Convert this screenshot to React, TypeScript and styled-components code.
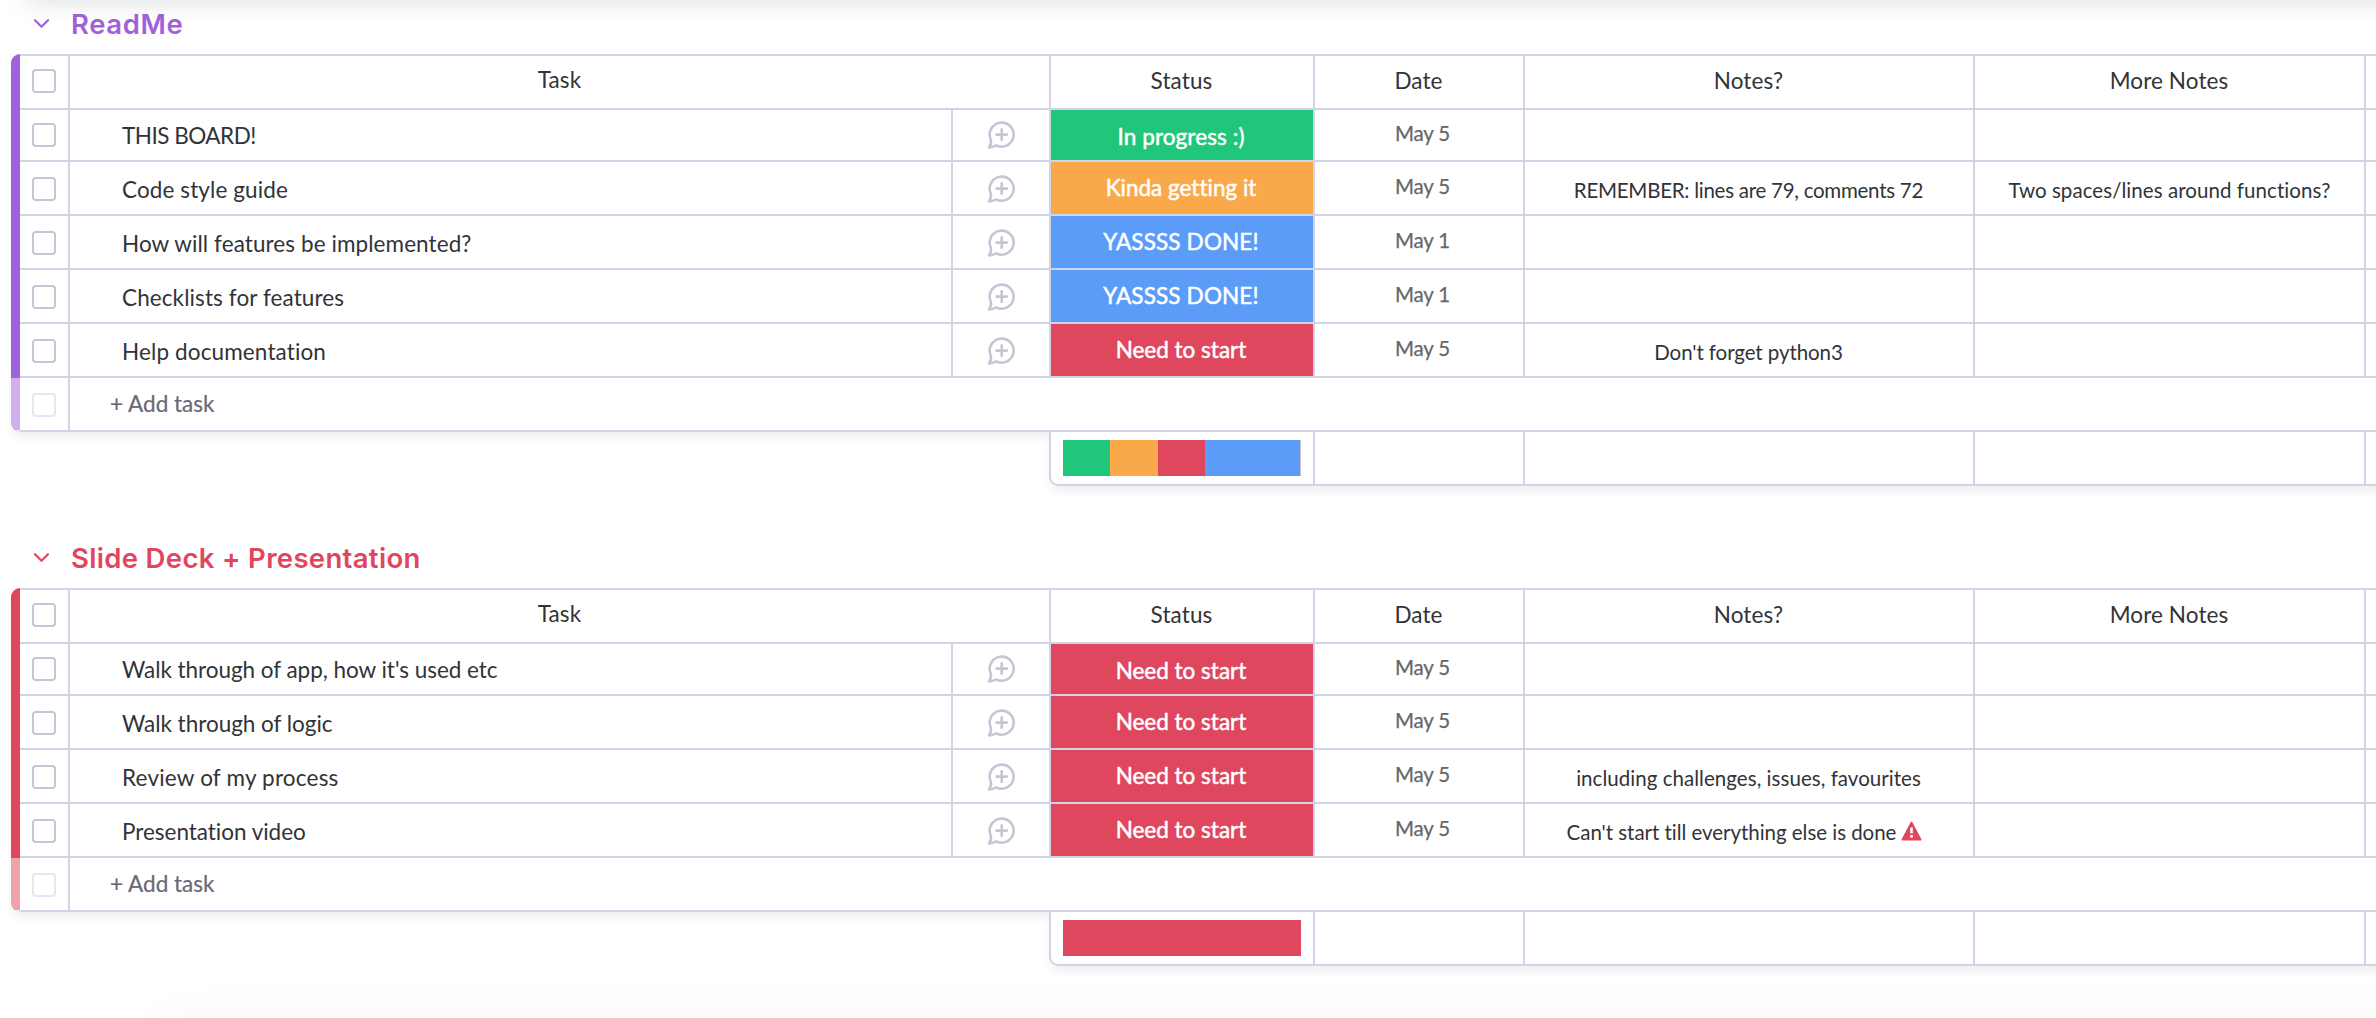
import React from 'react';
import styled, { createGlobalStyle } from 'styled-components';

const LINE = '#d0d4e4';
const RED = '#df475e';
const GREEN = '#20c77b';
const ORANGE = '#faa94a';
const BLUE = '#5b9cf8';
const PURPLE = '#a161da';

const GlobalStyle = createGlobalStyle`
  * { box-sizing: border-box; }
  html, body { margin: 0; background: #fff; overflow: hidden; }
  body { font-family: Lato, "Liberation Sans", sans-serif; color: #323338; }
`;

const Board = styled.main`
  position: relative;
  width: 2376px;
  height: 1018px;
  overflow: hidden;
  background: #fff;
`;

const TopShade = styled.div`
  position: absolute;
  top: -40px;
  left: 30px;
  right: -60px;
  height: 38px;
  box-shadow: 0 0 24px 4px rgba(60, 65, 85, 0.17);
`;

const BottomShade = styled.div`
  position: absolute;
  left: 170px;
  right: -100px;
  bottom: -60px;
  height: 40px;
  box-shadow: 0 0 60px 0 rgba(0, 0, 0, 0.1);
`;

const Group = styled.section`
  height: 534px;
  padding-left: 11px;
`;

const GroupTitle = styled.header<{ $color: string }>`
  display: flex;
  align-items: center;
  height: 54px;
  padding: 0 0 6px 22px;
  color: ${(p) => p.$color};
`;

const Chevron = styled.svg`
  width: 17px;
  height: 12px;
  flex: none;
`;

const TitleText = styled.h2<{ $spacing: number }>`
  margin: 0 0 0 21px;
  font: 600 27.5px/36px Inter, "Liberation Sans", sans-serif;
  letter-spacing: ${(p) => p.$spacing}px;
  white-space: nowrap;
`;

const Table = styled.div`
  display: flex;
  width: 2380px;
  border-bottom-left-radius: 9px;
  box-shadow: 0 7px 12px -3px rgba(0, 0, 0, 0.08);
`;

const Stripe = styled.div`
  display: flex;
  flex-direction: column;
  width: 9px;
  flex: none;
  border-radius: 9px 0 0 9px;
  overflow: hidden;
`;

const StripeMain = styled.div<{ $color: string }>`
  flex: 1;
  background: ${(p) => p.$color};
`;

const StripeFade = styled.div<{ $color: string }>`
  height: 54px;
  background: ${(p) => p.$color};
  opacity: 0.5;
  border-bottom: 2px solid ${LINE};
`;

const Rows = styled.div`
  flex: 1;
  border-top: 2px solid ${LINE};
`;

const columns = '50px 883px 98px 264px 210px 450px 391px 1fr';

const Row = styled.div<{ $first?: boolean }>`
  display: grid;
  grid-template-columns: ${columns};
  height: ${(p) => (p.$first ? 52 : 54)}px;
  border-bottom: 2px solid ${LINE};
`;

const Cell = styled.div<{ $span?: number; $shift?: number; $plain?: boolean }>`
  display: flex;
  align-items: center;
  justify-content: center;
  min-width: 0;
  grid-column: span ${(p) => p.$span ?? 1};
  padding-top: ${(p) => Math.max(0, p.$shift ?? 0)}px;
  padding-bottom: ${(p) => Math.max(0, -(p.$shift ?? 0))}px;
  border-right: ${(p) => (p.$plain ? '0' : `2px solid ${LINE}`)};
  white-space: nowrap;
`;

const NameCell = styled(Cell)`
  justify-content: flex-start;
  padding-left: 52px;
`;

const AddCell = styled(Cell)`
  justify-content: flex-start;
  padding-left: 40px;
`;

const DateCell = styled(Cell)`
  padding-left: 7px;
`;

const NoteCell = styled(Cell)<{ $warn?: boolean }>`
  padding-right: ${(p) => (p.$warn ? 9 : 1)}px;
`;

const StatusCell = styled(Cell)<{ $color: string }>`
  padding-right: 2px;
  background: ${(p) => p.$color};
  background-clip: padding-box;
`;

const Checkbox = styled.span<{ $faded?: boolean }>`
  width: 24px;
  height: 24px;
  border: 2px solid ${(p) => (p.$faded ? '#e7e7ee' : '#c3c6d4')};
  border-radius: 4px;
`;

type TextKind = 'name' | 'head' | 'status' | 'date' | 'note' | 'add';

const kinds: Record<TextKind, { size: number; color: string; stroke: number }> = {
  name: { size: 22.5, color: '#323338', stroke: 0 },
  head: { size: 22.5, color: '#323338', stroke: 0 },
  status: { size: 22.5, color: '#ffffff', stroke: 0.5 },
  date: { size: 20.5, color: '#676767', stroke: 0.25 },
  note: { size: 20.5, color: '#323338', stroke: 0 },
  add: { size: 22.5, color: '#676879', stroke: 0.2 },
};

const Text = styled.span<{ $kind: TextKind; $spacing?: number }>`
  font: 400 ${(p) => kinds[p.$kind].size}px/30px Lato, "Liberation Sans", sans-serif;
  font-variant-ligatures: none;
  color: ${(p) => kinds[p.$kind].color};
  -webkit-text-stroke: ${(p) => kinds[p.$kind].stroke}px currentColor;
  letter-spacing: ${(p) => p.$spacing ?? 0}px;
`;

const Icon = styled.svg`
  width: 30px;
  height: 30px;
  flex: none;
`;

const WarningIcon = styled.svg`
  width: 21px;
  height: 20px;
  margin: 0 0 2px 5px;
`;

const Summary = styled.div`
  display: grid;
  grid-template-columns: 264px 210px 450px 391px 1fr;
  position: relative;
  width: 1400px;
  height: 54px;
  margin-left: 1038px;
  background: #fff;
  border-left: 2px solid ${LINE};
  border-bottom: 2px solid ${LINE};
  border-bottom-left-radius: 9px;
  box-shadow: 0 7px 12px -3px rgba(0, 0, 0, 0.08);
`;

const Battery = styled.div`
  display: flex;
  width: 238px;
  height: 36px;
  background: #c4c4c4;
`;

const Segment = styled.div<{ $color: string }>`
  background: ${(p) => p.$color};
`;

function ChatIcon() {
  return (
    <Icon viewBox="0 0 30 30" fill="none" stroke="#c3c6d4" strokeWidth="2.6" strokeLinecap="round" strokeLinejoin="round">
      <path d="M4.8 19.7A12 12 0 1 1 10.2 25.3C8.2 26.4 5.6 27.3 3 27.4C4.6 25.2 5.4 22.6 4.8 19.7Z" />
      <path d="M15.7 9.4V19.8M10.5 14.6H20.9" />
    </Icon>
  );
}

interface Task {
  name: string;
  nameSpacing: number;
  status: string;
  color: string;
  date: string;
  notes?: string;
  noteSpacing?: number;
  more?: string;
  warn?: boolean;
}

interface GroupData {
  title: string;
  spacing: number;
  color: string;
  tasks: Task[];
  battery: { color: string; width: number }[];
}

const statusSpacing: Record<string, number> = {
  'In progress :)': 0.1,
  'Kinda getting it': 0,
  'YASSSS DONE!': 0.15,
  'Need to start': 0,
};

const groups: GroupData[] = [
  {
    title: 'ReadMe',
    spacing: 0.6,
    color: PURPLE,
    tasks: [
      { name: 'THIS BOARD!', nameSpacing: -0.5, status: 'In progress :)', color: GREEN, date: 'May 5' },
      {
        name: 'Code style guide',
        nameSpacing: 0.1,
        status: 'Kinda getting it',
        color: ORANGE,
        date: 'May 5',
        notes: 'REMEMBER: lines are 79, comments 72',
        noteSpacing: -0.26,
        more: 'Two spaces/lines around functions?',
      },
      { name: 'How will features be implemented?', nameSpacing: 0.08, status: 'YASSSS DONE!', color: BLUE, date: 'May 1' },
      { name: 'Checklists for features', nameSpacing: 0.1, status: 'YASSSS DONE!', color: BLUE, date: 'May 1' },
      {
        name: 'Help documentation',
        nameSpacing: 0.13,
        status: 'Need to start',
        color: RED,
        date: 'May 5',
        notes: "Don't forget python3",
        noteSpacing: -0.08,
      },
    ],
    battery: [
      { color: GREEN, width: 47 },
      { color: ORANGE, width: 48 },
      { color: RED, width: 47 },
      { color: BLUE, width: 95 },
    ],
  },
  {
    title: 'Slide Deck + Presentation',
    spacing: 0.33,
    color: RED,
    tasks: [
      {
        name: "Walk through of app, how it's used etc",
        nameSpacing: -0.04,
        status: 'Need to start',
        color: RED,
        date: 'May 5',
      },
      { name: 'Walk through of logic', nameSpacing: -0.02, status: 'Need to start', color: RED, date: 'May 5' },
      {
        name: 'Review of my process',
        nameSpacing: 0.2,
        status: 'Need to start',
        color: RED,
        date: 'May 5',
        notes: 'including challenges, issues, favourites',
        noteSpacing: 0.04,
      },
      {
        name: 'Presentation video',
        nameSpacing: -0.03,
        status: 'Need to start',
        color: RED,
        date: 'May 5',
        notes: "Can't start till everything else is done",
        noteSpacing: -0.04,
        warn: true,
      },
    ],
    battery: [{ color: RED, width: 238 }],
  },
];

function TaskRow({ task, first }: { task: Task; first: boolean }) {
  const k = first ? 0 : 2;
  return (
    <Row $first={first}>
      <Cell $shift={k}>
        <Checkbox />
      </Cell>
      <NameCell $shift={k + 2}>
        <Text $kind="name" $spacing={task.nameSpacing}>{task.name}</Text>
      </NameCell>
      <Cell $shift={k}>
        <ChatIcon />
      </Cell>
      <StatusCell $color={task.color} $shift={first ? 3 : 0}>
        <Text $kind="status" $spacing={statusSpacing[task.status]}>{task.status}</Text>
      </StatusCell>
      <DateCell $shift={-4}>
        <Text $kind="date" $spacing={-0.2}>{task.date}</Text>
      </DateCell>
      <NoteCell $shift={4} $warn={task.warn}>
        {task.notes && <Text $kind="note" $spacing={task.noteSpacing}>{task.notes}</Text>}
        {task.warn && (
          <WarningIcon viewBox="0 0 21 20">
            <path d="M10.5 1.6L19.5 18.6H1.5Z" fill={RED} stroke={RED} strokeWidth="2" strokeLinejoin="round" />
            <path d="M10.5 6.4V12.2M10.5 14V16.8" stroke="#fff" strokeWidth="2.6" />
          </WarningIcon>
        )}
      </NoteCell>
      <Cell $shift={4}>{task.more && <Text $kind="note" $spacing={0.06}>{task.more}</Text>}</Cell>
      <Cell $plain />
    </Row>
  );
}

function BoardGroup({ data }: { data: GroupData }) {
  return (
    <Group>
      <GroupTitle $color={data.color}>
        <Chevron viewBox="0 0 17 12" fill="none" stroke="currentColor" strokeWidth="2.2" strokeLinecap="round" strokeLinejoin="round">
          <path d="M2 2.2L8.5 8.7L15 2.2" />
        </Chevron>
        <TitleText $spacing={data.spacing}>{data.title}</TitleText>
      </GroupTitle>
      <Table>
        <Stripe>
          <StripeMain $color={data.color} />
          <StripeFade $color={data.color} />
        </Stripe>
        <Rows>
          <Row>
            <Cell $shift={-2}>
              <Checkbox />
            </Cell>
            <Cell $span={2} $shift={-4}>
              <Text $kind="head" $spacing={0.1}>Task</Text>
            </Cell>
            {['Status', 'Date', 'Notes?', 'More Notes'].map((h) => (
              <NoteCell key={h} $shift={-2}>
                <Text $kind="head" $spacing={0.1}>{h}</Text>
              </NoteCell>
            ))}
            <Cell $plain />
          </Row>
          {data.tasks.map((t, i) => (
            <TaskRow key={t.name} task={t} first={i === 0} />
          ))}
          <Row>
            <Cell $shift={2}>
              <Checkbox $faded />
            </Cell>
            <AddCell $span={7} $plain>
              <Text $kind="add">+ Add task</Text>
            </AddCell>
          </Row>
        </Rows>
      </Table>
      <Summary>
        <Cell>
          <Battery>
            {data.battery.map((s) => (
              <Segment key={s.color} $color={s.color} style={{ width: s.width }} />
            ))}
          </Battery>
        </Cell>
        <Cell />
        <Cell />
        <Cell />
        <Cell $plain />
      </Summary>
    </Group>
  );
}

export default function App() {
  return (
    <Board>
      <GlobalStyle />
      <TopShade />
      <BottomShade />
      {groups.map((g) => (
        <BoardGroup key={g.title} data={g} />
      ))}
    </Board>
  );
}
